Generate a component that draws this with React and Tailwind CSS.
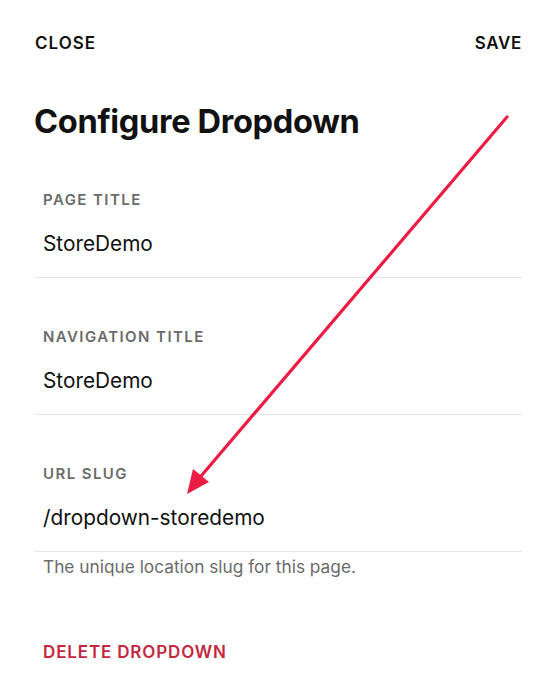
export default function App() {
  const fields = [
    { label: "PAGE TITLE", value: "StoreDemo" },
    { label: "NAVIGATION TITLE", value: "StoreDemo" },
    { label: "URL SLUG", value: "/dropdown-storedemo", help: "The unique location slug for this page." },
  ];
  return (
    <div
      className="relative w-[559px] h-[700px] bg-white overflow-hidden"
      style={{ fontFamily: "Inter, 'Liberation Sans', sans-serif" }}
    >
      <div className="flex items-center justify-between pl-[35px] pr-[37px] pt-[33px]">
        <button className="text-[17px] font-semibold tracking-[0.06em] text-[#111] leading-[20px]">CLOSE</button>
        <button className="text-[17px] font-semibold tracking-[0.04em] text-[#111] leading-[20px]">SAVE</button>
      </div>
      <h1 className="pl-[34px] mt-[49px] text-[32.6px] font-bold tracking-[-0.01em] text-[#111] leading-[38px]">
        Configure Dropdown
      </h1>
      <div className="pl-[35px] pr-[37px] mt-[51px]">
        {fields.map((f, i) => (
          <div key={f.label} className={i === 0 ? "" : "pt-[50px]"}>
            <div className="pl-[8px] text-[15px] font-semibold tracking-[0.095em] text-[#6b6b6b] leading-[18px]">
              {f.label}
            </div>
            <div className="pl-[8px] mt-[23px] text-[20.8px] text-[#111] leading-[24px]">{f.value}</div>
            <div className="mt-[21px] h-px bg-[#e6e6e6]" />
            {f.help && (
              <div className="pl-[8px] mt-[5px] text-[17.3px] text-[#6b6b6b] leading-[20px]">{f.help}</div>
            )}
          </div>
        ))}
        <button className="pl-[8px] mt-[65px] text-[17px] font-semibold tracking-[0.05em] text-[#c4283f] leading-[20px]">
          DELETE DROPDOWN
        </button>
      </div>
      <svg className="absolute left-0 top-0 pointer-events-none" width="559" height="700" viewBox="0 0 559 700">
        <line x1="507" y1="117" x2="196" y2="482" stroke="#ec1c45" strokeWidth="3.2" strokeLinecap="round" />
        <polygon points="187,494 193,469 209,482" fill="#ec1c45" />
      </svg>
    </div>
  );
}
